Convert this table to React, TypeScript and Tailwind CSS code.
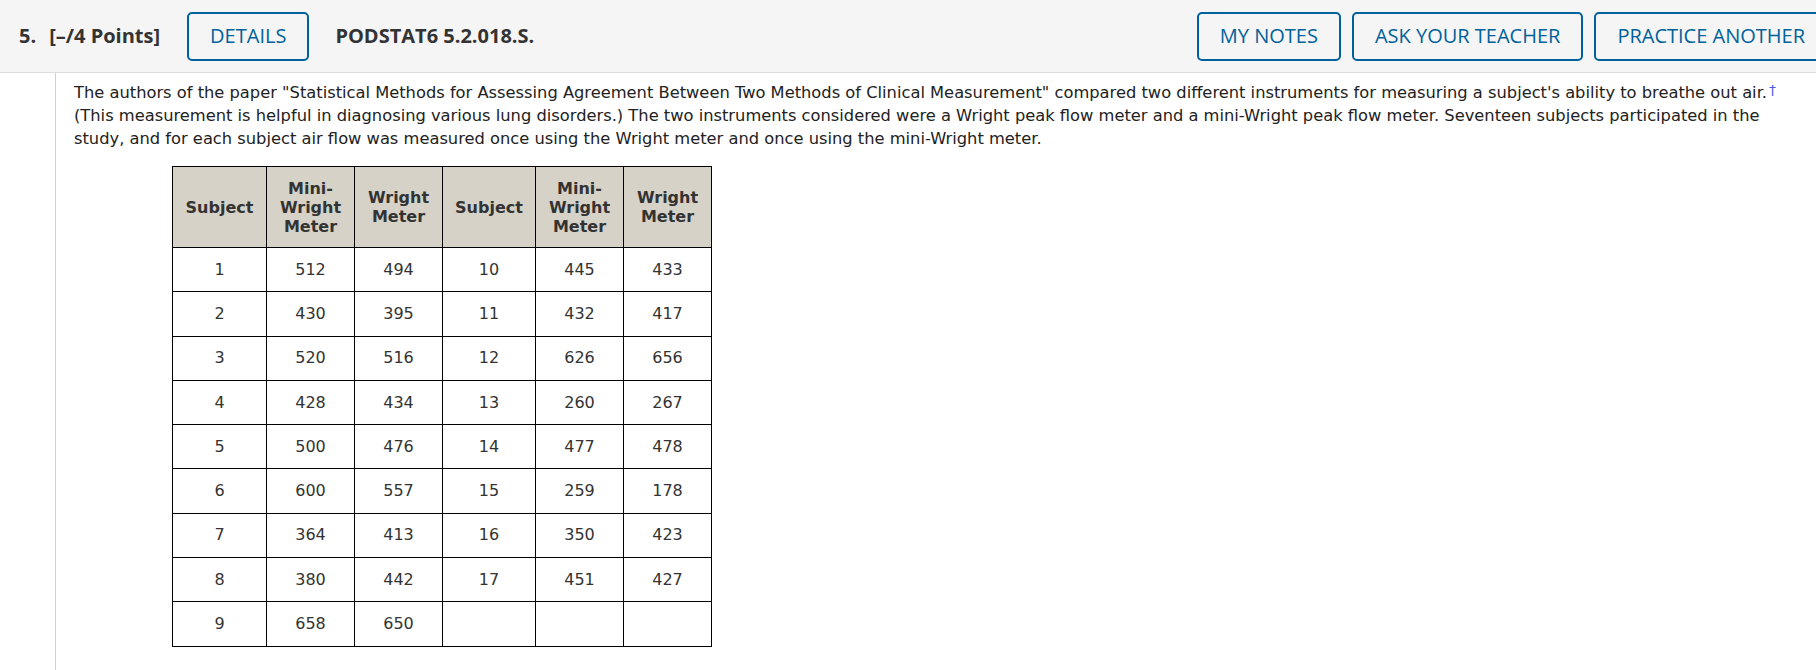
const rows: [string, string, string, string, string, string][] = [
  ['1', '512', '494', '10', '445', '433'],
  ['2', '430', '395', '11', '432', '417'],
  ['3', '520', '516', '12', '626', '656'],
  ['4', '428', '434', '13', '260', '267'],
  ['5', '500', '476', '14', '477', '478'],
  ['6', '600', '557', '15', '259', '178'],
  ['7', '364', '413', '16', '350', '423'],
  ['8', '380', '442', '17', '451', '427'],
  ['9', '658', '650', '', '', ''],
];

const colWidths = ['w-[94px]', 'w-[88px]', 'w-[88px]', 'w-[93px]', 'w-[88px]', 'w-[88px]'];

function HeaderButton({ children }: Readonly<{ children: React.ReactNode }>) {
  return (
    <button
      type="button"
      className="flex h-[49px] items-center rounded-[5px] border-2 border-[#00629b] px-[21px] text-[20px] text-[#00629b]"
    >
      {children}
    </button>
  );
}

function HeadCell({ children }: Readonly<{ children: React.ReactNode }>) {
  return (
    <th className="border border-black bg-[#d6d2c8] px-1 text-center align-middle text-[16px] font-bold leading-[19px] text-[#333]">
      {children}
    </th>
  );
}

export default function App() {
  return (
    <div className="h-[670px] w-[1816px] overflow-hidden bg-white">
      <div className="flex h-[73px] w-[1828px] items-center border-b border-[#dddddd] bg-[#f5f5f5] pl-[19px] font-['Open_Sans',sans-serif]">
        <span className="text-[20px] font-bold text-[#333]">5.</span>
        <span className="ml-[13px] text-[20px] font-bold text-[#333]">[–/4 Points]</span>
        <div className="ml-[27px]">
          <HeaderButton>DETAILS</HeaderButton>
        </div>
        <span className="ml-[26px] text-[20px] font-bold text-[#333]">PODSTAT6 5.2.018.S.</span>
        <div className="ml-auto flex gap-[11px]">
          <HeaderButton>MY NOTES</HeaderButton>
          <HeaderButton>ASK YOUR TEACHER</HeaderButton>
          <HeaderButton>PRACTICE ANOTHER</HeaderButton>
        </div>
      </div>

      <div className="ml-[55px] h-[597px] border-l border-[#d0d0d0] pl-[18px] pr-[24px] pt-[8px] font-['DejaVu_Sans',Verdana,sans-serif] text-[#222]">
        <p className="text-[16.3px] leading-[23px]">
          The authors of the paper "Statistical Methods for Assessing Agreement Between Two Methods of Clinical
          Measurement" compared two different instruments for measuring a subject's ability to breathe out air.
          <span className="ml-[2px] align-text-top text-[14px] leading-none text-[#4a5cf0]">†</span> (This
          measurement is helpful in diagnosing various lung disorders.) The two instruments considered were a Wright
          peak flow meter and a mini-Wright peak flow meter. Seventeen subjects participated in the study, and for
          each subject air flow was measured once using the Wright meter and once using the mini-Wright meter.
        </p>

        <table className="ml-[98px] mt-[16px] table-fixed border-collapse">
          <colgroup>
            {colWidths.map((w, i) => (
              <col key={i} className={w} />
            ))}
          </colgroup>
          <thead>
            <tr className="h-[81px]">
              <HeadCell>Subject</HeadCell>
              <HeadCell>
                Mini-
                <br />
                Wright
                <br />
                Meter
              </HeadCell>
              <HeadCell>
                Wright
                <br />
                Meter
              </HeadCell>
              <HeadCell>Subject</HeadCell>
              <HeadCell>
                Mini-
                <br />
                Wright
                <br />
                Meter
              </HeadCell>
              <HeadCell>
                Wright
                <br />
                Meter
              </HeadCell>
            </tr>
          </thead>
          <tbody>
            {rows.map((r) => (
              <tr key={r[0]} className="h-[44.3px]">
                {r.map((v, i) => (
                  <td key={i} className="border border-black text-center align-middle text-[16px] text-[#333]">
                    {v}
                  </td>
                ))}
              </tr>
            ))}
          </tbody>
        </table>
      </div>
    </div>
  );
}
